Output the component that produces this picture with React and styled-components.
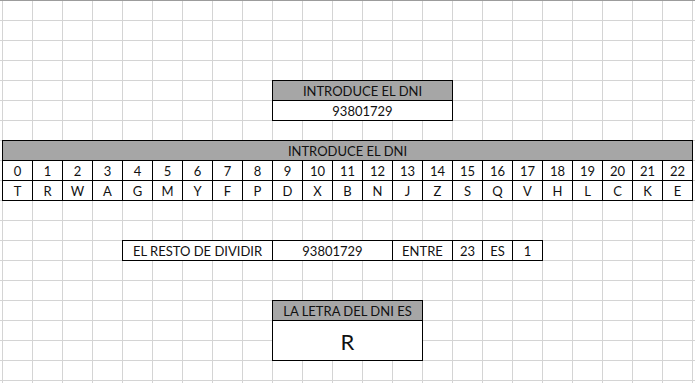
import React from 'react'
import styled, { createGlobalStyle } from 'styled-components'

const GlobalStyle = createGlobalStyle`
  html, body {
    margin: 0;
    padding: 0;
    background: #fff;
  }
  body {
    font-family: Lato, "Liberation Sans", sans-serif;
  }
`

// worksheet: 30px columns, 20px rows, gridlines drawn as background
const Sheet = styled.div`
  width: 695px;
  height: 383px;
  overflow: hidden;
  box-sizing: border-box;
  padding-left: 2px;
  display: grid;
  grid-template-columns: repeat(24, 30px);
  grid-template-rows: repeat(20, 20px);
  background-color: #fff;
  background-image:
    linear-gradient(to right, #d4d4d4 1px, transparent 1px),
    linear-gradient(to bottom, #d4d4d4 1px, transparent 1px);
  background-size: 30px 20px, 30px 20px;
  background-position: 2px 0, 0 0;
  box-shadow: inset 0 1px 0 #9c9c9c;
`

// bordered cell; the -1px margins let neighbours share one border line
const Cell = styled.div`
  grid-column: ${p => p.$col} / span ${p => p.$span || 1};
  grid-row: ${p => p.$row} / span ${p => p.$rows || 1};
  margin: 0 -1px -1px 0;
  border: 1px solid #000;
  background: ${p => (p.$head ? '#a6a6a6' : '#fff')};
  display: flex;
  align-items: center;
  justify-content: center;
  padding-top: 1px;
  font-size: ${p => (p.$big ? '22px' : '13px')};
  color: #111;
  white-space: nowrap;
  overflow: hidden;
`

const dni = 93801729
const letters = 'TRWAGMYFPDXBNJZSQVHLCKE'.split('')
const resto = dni % 23

const App = () => {
  return (
    <>
      <GlobalStyle />
      <Sheet>
        <Cell $col={10} $span={6} $row={5} $head>INTRODUCE EL DNI</Cell>
        <Cell $col={10} $span={6} $row={6}>{dni}</Cell>

        <Cell $col={1} $span={23} $row={8} $head>INTRODUCE EL DNI</Cell>
        {letters.map((l, i) => (
          <Cell key={'n' + i} $col={i + 1} $row={9}>{i}</Cell>
        ))}
        {letters.map((l, i) => (
          <Cell key={'l' + i} $col={i + 1} $row={10}>{l}</Cell>
        ))}

        <Cell $col={5} $span={5} $row={13}>EL RESTO DE DIVIDIR</Cell>
        <Cell $col={10} $span={4} $row={13}>{dni}</Cell>
        <Cell $col={14} $span={2} $row={13}>ENTRE</Cell>
        <Cell $col={16} $row={13}>23</Cell>
        <Cell $col={17} $row={13}>ES</Cell>
        <Cell $col={18} $row={13}>{resto}</Cell>

        <Cell $col={10} $span={5} $row={16} $head>LA LETRA DEL DNI ES</Cell>
        <Cell $col={10} $span={5} $row={17} $rows={2} $big>{letters[resto]}</Cell>
      </Sheet>
    </>
  )
}

export default App
